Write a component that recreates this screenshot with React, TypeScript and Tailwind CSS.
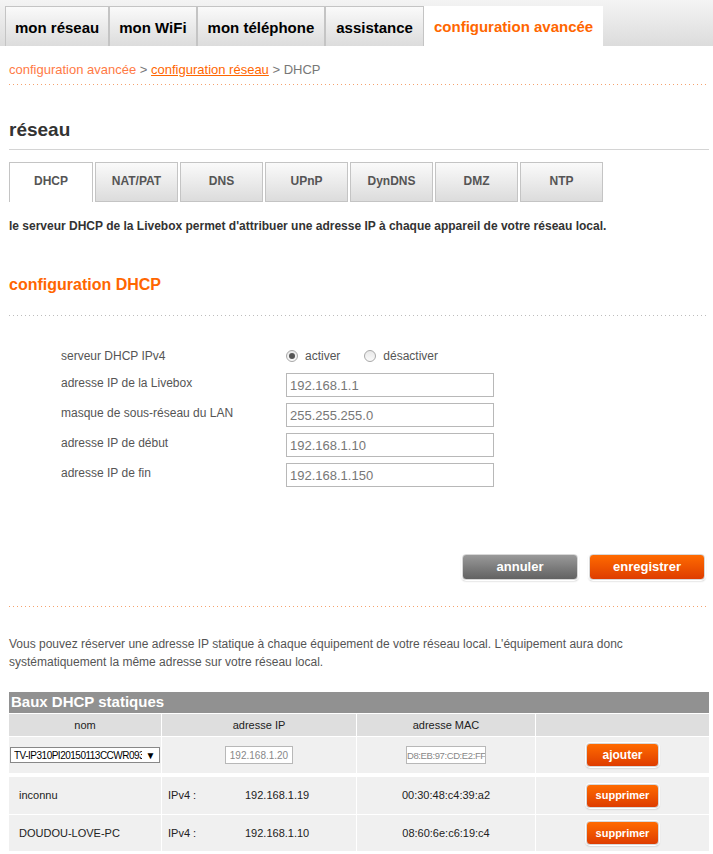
import { useState } from 'react'

const mainTabs = ['mon réseau', 'mon WiFi', 'mon téléphone', 'assistance']
const subTabs = ['DHCP', 'NAT/PAT', 'DNS', 'UPnP', 'DynDNS', 'DMZ', 'NTP']
const fields = [
  { label: 'adresse IP de la Livebox', value: '192.168.1.1' },
  { label: 'masque de sous-réseau du LAN', value: '255.255.255.0' },
  { label: 'adresse IP de début', value: '192.168.1.10' },
  { label: 'adresse IP de fin', value: '192.168.1.150' },
]
const leases = [
  { name: 'inconnu', ip: '192.168.1.19', mac: '00:30:48:c4:39:a2' },
  { name: 'DOUDOU-LOVE-PC', ip: '192.168.1.10', mac: '08:60:6e:c6:19:c4' },
]

function Dots({ color }: { color: 'orange' | 'gray' }) {
  return (
    <div
      className={
        color === 'orange'
          ? 'h-px w-full bg-[linear-gradient(to_right,#f5a26e_1px,transparent_1px)] bg-[length:4px_1px]'
          : 'h-px w-full bg-[linear-gradient(to_right,#bdbdbd_1px,transparent_1px)] bg-[length:4px_1px]'
      }
    />
  )
}

function OrangeBtn({ children, className = '' }: { children: string; className?: string }) {
  return (
    <button
      className={`rounded-[4px] border border-[#d8d8d8] bg-gradient-to-b from-[#ff6a00] to-[#de3c00] font-bold text-white shadow-[0_0_0_1px_#fff,0_1px_2px_rgba(0,0,0,0.3)] ${className}`}
    >
      {children}
    </button>
  )
}

export default function App() {
  const [dhcp, setDhcp] = useState(true)
  return (
    <div className="min-h-[854px] bg-white font-['Liberation_Sans',Arial,sans-serif] text-[#555]">
      {/* barre principale */}
      <div className="flex h-[46px] items-end bg-gradient-to-b from-[#f4f4f4] to-[#dcdcdc] pl-[5px]">
        {mainTabs.map((t, i) => (
          <div
            key={t}
            className={`flex h-[40px] items-center border border-b-0 border-[#c4c4c4] bg-gradient-to-b from-[#fafafa] to-[#dcdcdc] pt-[3px] text-[15px] font-bold text-black ${i < 2 ? 'px-[9px]' : 'px-[10px]'}`}
          >
            {t}
          </div>
        ))}
        <div className="flex h-[40px] items-center bg-white px-[10px] pt-[3px] text-[15px] font-bold text-[#ff6600]">
          configuration avancée
        </div>
      </div>

      <div className="ml-[9px] w-[700px]">
        {/* fil d'ariane */}
        <div className="pt-[14px] pb-[4px] text-[13px] text-[#777]">
          <span className="text-[#ff7a45]">configuration avancée</span> &gt;{' '}
          <span className="text-[#ff6600] underline">configuration réseau</span> &gt; DHCP
        </div>
        <Dots color="orange" />

        <h1 className="mt-[31px] pb-[5px] text-[19px] font-bold text-[#333]">réseau</h1>
        <div className="h-px bg-[#d4d4d4]" />

        {/* sous-onglets */}
        <div className="mt-[12px] flex gap-[2px]">
          {subTabs.map((t, i) => (
            <div
              key={t}
              className={
                i === 0
                  ? 'flex h-[40px] w-[84px] justify-center border border-b-0 border-[#c4c4c4] bg-white pt-[9px] text-[12px] font-bold text-[#555]'
                  : 'flex h-[40px] w-[83px] justify-center border border-[#c4c4c4] bg-gradient-to-b from-[#fafafa] to-[#dcdcdc] pt-[9px] text-[12px] font-bold text-[#555]'
              }
            >
              {t}
            </div>
          ))}
        </div>

        <p className="mt-[15px] text-[12px] font-bold text-[#333]">
          le serveur DHCP de la Livebox permet d'attribuer une adresse IP à chaque appareil de votre réseau local.
        </p>

        <h2 className="mt-[38px] text-[16px] font-bold text-[#ff6600]">configuration DHCP</h2>
        <div className="mt-[18px]">
          <Dots color="gray" />
        </div>

        {/* formulaire */}
        <div className="mt-[31px] flex flex-col gap-[6px] pl-[52px] text-[12px] text-[#555]">
          <div className="flex h-[20px] items-start">
            <span className="w-[225px]">serveur DHCP IPv4</span>
            <label className="flex items-center gap-[7px]" onClick={() => setDhcp(true)}>
              <Radio on={dhcp} />
              activer
            </label>
            <label className="ml-[24px] flex items-center gap-[7px]" onClick={() => setDhcp(false)}>
              <Radio on={!dhcp} />
              désactiver
            </label>
          </div>
          {fields.map((f) => (
            <div key={f.label} className="flex h-[24px] items-center">
              <span className="w-[225px] -translate-y-[2px]">{f.label}</span>
              <input
                defaultValue={f.value}
                className="h-[24px] w-[208px] border border-[#b8b8b8] px-[3px] text-[13px] text-[#777] outline-none"
              />
            </div>
          ))}
        </div>

        {/* boutons */}
        <div className="mt-[67px] flex justify-end gap-[11px] pr-[4px]">
          <button className="h-[26px] w-[116px] rounded-[4px] border border-[#d8d8d8] bg-gradient-to-b from-[#9a9a9a] to-[#626262] text-[13px] font-bold text-white shadow-[0_0_0_1px_#fff,0_1px_2px_rgba(0,0,0,0.3)]">
            annuler
          </button>
          <OrangeBtn className="h-[26px] w-[116px] text-[13px]">enregistrer</OrangeBtn>
        </div>

        <div className="mt-[26px]">
          <Dots color="orange" />
        </div>

        <p className="mt-[28px] text-[12px] leading-[18px] text-[#555]">
          Vous pouvez réserver une adresse IP statique à chaque équipement de votre réseau local. L'équipement aura donc
          systématiquement la même adresse sur votre réseau local.
        </p>

        {/* tableau */}
        <div className="mt-[21px] text-[11px] text-[#222]">
          <div className="flex h-[21px] items-center bg-[#919191] px-[2px] text-[15px] font-bold text-white">
            Baux DHCP statiques
          </div>
          <div className="grid h-[23px] grid-cols-[153px_195px_179px_1fr] bg-[#dedede]">
            <div className="flex items-center justify-center border-r border-t border-white">nom</div>
            <div className="flex items-center justify-center border-r border-t border-white">adresse IP</div>
            <div className="flex items-center justify-center border-r border-t border-white">adresse MAC</div>
            <div className="border-t border-white" />
          </div>
          <div className="grid h-[37px] grid-cols-[153px_195px_179px_1fr] border-t border-white bg-[#f0f0f0]">
            <div className="flex items-center border-r border-white pl-[1px]">
              <div className="flex h-[16px] w-[150px] items-center border border-[#888] bg-white pl-[3px] pr-[4px] text-[10px] tracking-[-0.5px] text-black">
                <span className="min-w-0 flex-1 overflow-hidden whitespace-nowrap">TV-IP310PI20150113CCWR0933</span>
                <span className="pl-[4px] text-[10px]">▼</span>
              </div>
            </div>
            <div className="flex items-center justify-center border-r border-white">
              <input
                defaultValue="192.168.1.20"
                className="h-[18px] w-[68px] border border-[#b8b8b8] bg-white text-center text-[10px] text-[#888] outline-none"
              />
            </div>
            <div className="flex items-center justify-center border-r border-white">
              <input
                defaultValue="D8:EB:97:CD:E2:FF"
                className="h-[18px] w-[80px] border border-[#b8b8b8] bg-white px-0 text-[9.5px] tracking-[-0.4px] text-[#888] outline-none"
              />
            </div>
            <div className="flex items-center justify-center">
              <OrangeBtn className="h-[24px] w-[73px] text-[12px]">ajouter</OrangeBtn>
            </div>
          </div>
          <div className="h-[4px]" />
          {leases.map((l, i) => (
            <div
              key={l.name}
              className={`grid h-[37px] grid-cols-[153px_195px_179px_1fr] bg-[#f0f0f0] ${i > 0 ? 'border-t border-white' : ''}`}
            >
              <div className="flex items-center border-r border-white pl-[10px]">{l.name}</div>
              <div className="flex items-center border-r border-white pl-[6px]">
                <span className="w-[77px]">IPv4 :</span>
                <span>{l.ip}</span>
              </div>
              <div className="flex items-center justify-center border-r border-white">{l.mac}</div>
              <div className="flex items-center justify-center">
                <OrangeBtn className="h-[24px] w-[73px] text-[11px]">supprimer</OrangeBtn>
              </div>
            </div>
          ))}
        </div>
        <div className="mt-[3px]">
          <Dots color="orange" />
        </div>
      </div>
    </div>
  )
}

function Radio({ on }: { on: boolean }) {
  return (
    <span className="flex h-[12px] w-[12px] items-center justify-center rounded-full border border-[#a8a8a8] bg-gradient-to-b from-[#e8e8e8] to-[#fafafa]">
      {on && <span className="h-[6px] w-[6px] rounded-full bg-[#555]" />}
    </span>
  )
}
